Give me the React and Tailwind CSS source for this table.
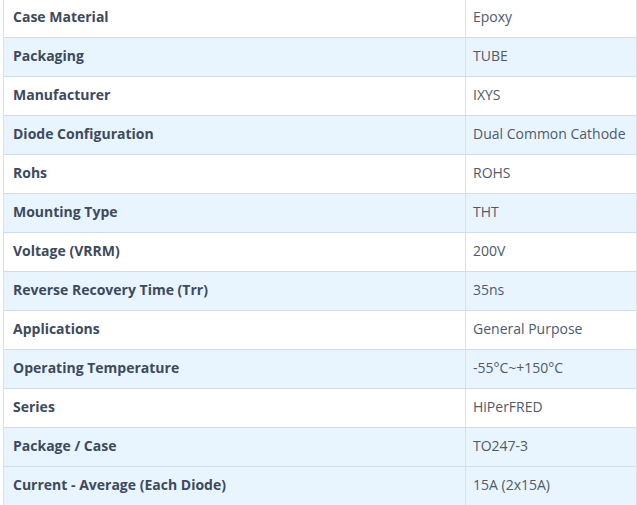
import React from "react";

const rows = [
  ["Case Material", "Epoxy"],
  ["Packaging", "TUBE"],
  ["Manufacturer", "IXYS"],
  ["Diode Configuration", "Dual Common Cathode"],
  ["Rohs", "ROHS"],
  ["Mounting Type", "THT"],
  ["Voltage (VRRM)", "200V"],
  ["Reverse Recovery Time (Trr)", "35ns"],
  ["Applications", "General Purpose"],
  ["Operating Temperature", "-55°C~+150°C"],
  ["Series", "HiPerFRED"],
  ["Package / Case", "TO247-3"],
  ["Current - Average (Each Diode)", "15A (2x15A)"],
];

export default function App() {
  return (
    <div className="w-[637px] h-[505px] overflow-hidden bg-white" style={{ fontFamily: '"Open Sans", sans-serif' }}>
      <div className="-mt-px ml-[3px] w-[634px] border-l border-r border-[#d8e1ea]">
        {rows.map(([k, v], i) => (
          <div
            key={k}
            className={`flex h-[39px] border-b border-[#d3dde7] ${i % 2 === 1 || i === rows.length - 1 ? "bg-[#e9f5fe]" : "bg-white"}`}
          >
            <div className="w-[462px] border-r border-[#d8e1ea] pl-[9px] pb-[3px] flex items-center text-[14px] font-bold text-[#3d4a5c]">
              {k}
            </div>
            <div className="flex-1 pl-[7px] pb-[3px] flex items-center text-[14px] text-[#4f5a69]">
              {v}
            </div>
          </div>
        ))}
      </div>
    </div>
  );
}
